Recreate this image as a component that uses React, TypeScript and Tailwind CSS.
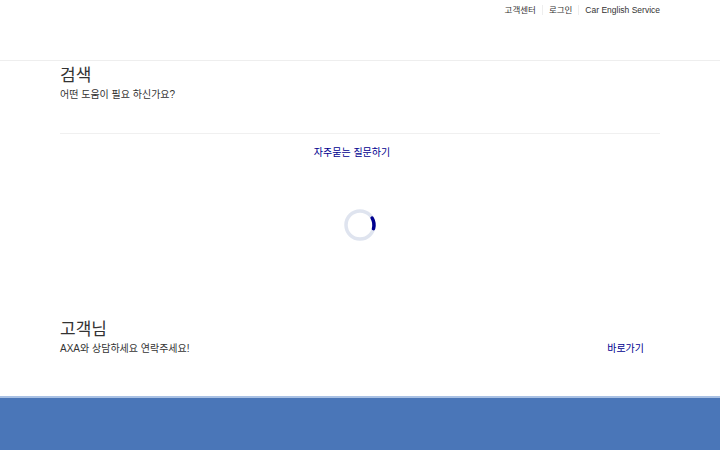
import { useEffect, useState } from "react";

// Top utility links in the header
const topLinks = ["고객센터", "로그인", "Car English Service"];

function Spinner() {
  return (
    <svg width="34" height="34" viewBox="0 0 34 34">
      <circle cx="17" cy="17" r="14" fill="none" stroke="#dfe4ef" strokeWidth="3.5" />
      <path
        d="M 29.1 10 A 14 14 0 0 1 30.5 20.6"
        fill="none"
        stroke="#00008f"
        strokeWidth="3.5"
        strokeLinecap="round"
      />
    </svg>
  );
}

export default function App() {
  const [ready, setReady] = useState(false);

  useEffect(() => {
    setReady(true);
  }, []);

  return (
    <div
      className="flex h-[450px] w-[720px] flex-col overflow-hidden bg-white text-[#333]"
      style={{ fontFamily: '"Liberation Sans", "Noto Sans CJK KR", sans-serif' }}
      data-ready={ready}
    >
      <header className="h-[61px] shrink-0 border-b border-[#eeeeee]">
        <nav className="mx-auto flex w-[600px] justify-end pt-[4px] text-[8.5px] leading-[12px]">
          {topLinks.map((link, i) => (
            <div key={link} className="flex items-center">
              {i > 0 && <span className="mx-[6px] h-[10px] w-px bg-[#eeeeee]" />}
              <a className="text-[#333]">{link}</a>
            </div>
          ))}
        </nav>
      </header>

      <main className="flex flex-1 flex-col">
        <section className="mx-auto w-[600px] pt-[3px]">
          <h1 className="text-[17px] leading-[24px] text-[#333]">검색</h1>
          <p className="text-[10px] leading-[14px] text-[#333]">어떤 도움이 필요 하신가요?</p>
          <div className="mt-[31px] border-t border-[#f0f0f0]" />
          <div className="mt-[12px] flex justify-center pr-[16px]">
            <a className="text-[10px] leading-[14px] text-[#00008f]">자주묻는 질문하기</a>
          </div>
          <div className="mt-[48px] flex justify-center">
            <Spinner />
          </div>
        </section>

        <section className="mx-auto mt-[76px] w-[600px]">
          <h2 className="text-[17px] leading-[24px] text-[#333]">고객님</h2>
          <div className="flex items-center justify-between">
            <p className="text-[10px] leading-[14px] text-[#333]">AXA와 상담하세요 연락주세요!</p>
            <a className="mr-[16px] text-[10px] leading-[14px] text-[#00008f]">바로가기</a>
          </div>
        </section>

        <div className="flex-1" />
        <footer className="h-[54px] shrink-0 border-t-2 border-[#a9c1e4] bg-[#4a76b8]" />
      </main>
    </div>
  );
}
